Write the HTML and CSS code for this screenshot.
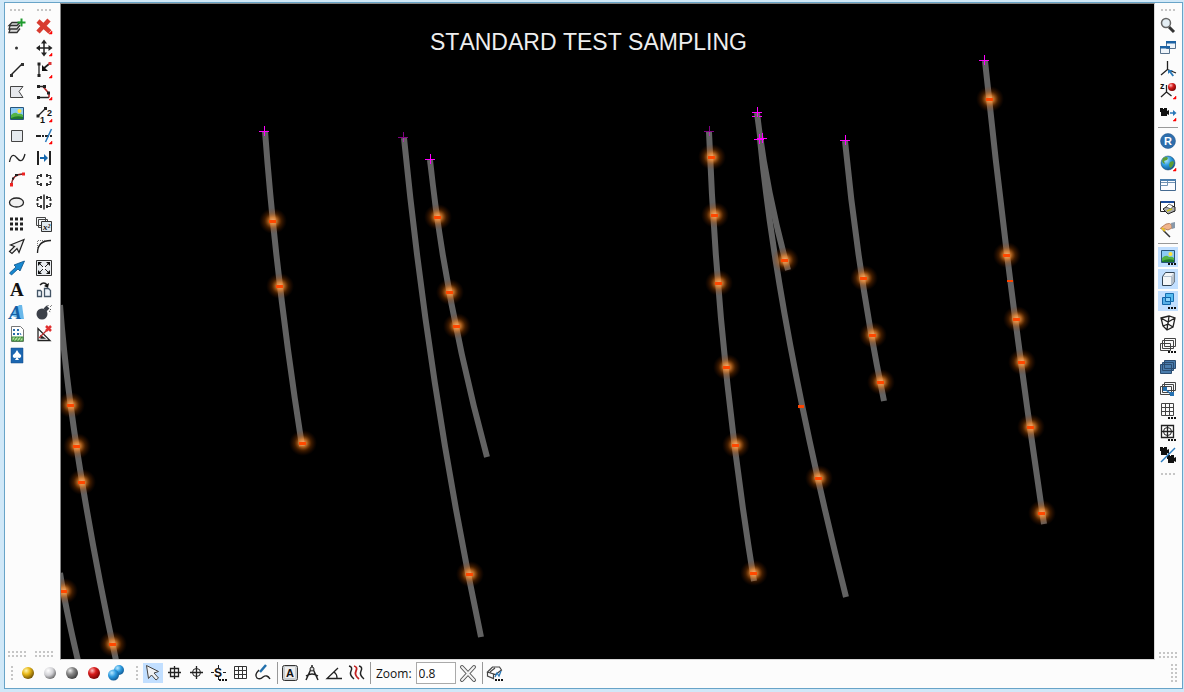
FILE: index.html
```html
<!DOCTYPE html>
<html lang="en">

<head>
    <meta charset="utf-8">
    <title>Standard Test Sampling</title>
    <meta name="viewport" content="width=device-width, initial-scale=1.0">
    <link rel="stylesheet" href="styles.css">
</head>

<body>
    <!-- shared shapes -->
    <svg class="defs" width="0" height="0" aria-hidden="true">
        <defs>
            <path id="more" d="M18 15v3h-3z" fill="#f00" stroke="#f00" stroke-width=".5" />
            <path id="dots" d="M10 16h2v2h-2zM13 16h2v2h-2zM16 16h2v2h-2z" fill="#111" stroke="none" />
            <radialGradient id="glow">
                <stop offset="0" stop-color="#ffb878" stop-opacity=".95" />
                <stop offset=".3" stop-color="#ff9030" stop-opacity=".7" />
                <stop offset=".6" stop-color="#d05c00" stop-opacity=".3" />
                <stop offset="1" stop-color="#802800" stop-opacity="0" />
            </radialGradient>
            <g id="sample">
                <ellipse cx="1" rx="14" ry="13" fill="url(#glow)" />
                <path d="M-3-1h7v3h-7z" fill="#ff4800" />
            </g>
            <path id="collar" d="M-5 .5H5M.5-5V5" stroke="#f0f" />
            <radialGradient id="gold" cx=".35" cy=".3" r=".8"><stop offset="0" stop-color="#fff6b0" /><stop offset=".4" stop-color="#e8b818" /><stop offset="1" stop-color="#5c4000" /></radialGradient>
            <radialGradient id="silver" cx=".35" cy=".3" r=".8"><stop offset="0" stop-color="#fff" /><stop offset=".5" stop-color="#d0d0d4" /><stop offset="1" stop-color="#555" /></radialGradient>
            <radialGradient id="gray" cx=".35" cy=".3" r=".8"><stop offset="0" stop-color="#eee" /><stop offset=".4" stop-color="#888" /><stop offset="1" stop-color="#303030" /></radialGradient>
            <radialGradient id="red" cx=".35" cy=".3" r=".8"><stop offset="0" stop-color="#ffc0c0" /><stop offset=".4" stop-color="#d81c1c" /><stop offset="1" stop-color="#600" /></radialGradient>
            <radialGradient id="blue" cx=".35" cy=".3" r=".8"><stop offset="0" stop-color="#b8e8ff" /><stop offset=".45" stop-color="#2e9ce0" /><stop offset="1" stop-color="#0a4f88" /></radialGradient>
            <g id="picture" stroke="none">
                <path d="M3.500 3.500h13v12h-13z" fill="#8ccbf4" stroke="#27567c" />
                <circle cx="12.500" cy="7" r="2" fill="#ffe23c" />
                <path d="M4 11q4-4 7-1 3-1 5 1v4H4z" fill="#54b444" />
                <path d="M4 14q6-3 12-1v2H4z" fill="#1f7a2c" />
            </g>
            <g id="brackets">
                <path d="M7 5.500H3.500V8M3.500 12v2.500H7M13 5.500h3.500V8M16.500 12v2.500H13" />
                <path d="M6 4h2v3H6zM6 13h2v3H6zM12 4h2v3h-2zM12 13h2v3h-2zM2.500 7h2v2h-2zM2.500 11h2v2h-2zM15.500 7h2v2h-2zM15.500 11h2v2h-2z" fill="#333" stroke="none" />
            </g>
            <path id="camera" d="M0 0h3v1h1V0h3v3l2-1v5L7 6v2H1V4H0z" fill="#111" stroke="none" />
        </defs>
    </svg>

    <div class="window">
        <main class="workspace">
            <div class="toolbar">
                <span class="grip"></span>
                <button type="button" aria-label="Add layer"><svg viewBox="0 0 20 20"><path d="M5 6.500h8l-3 3H2zM3 10l-1 3h8l3-4M3 13.500l-1 3h8l3-4" fill="#ddd" stroke="#333" stroke-width="1.300" /><path d="M14.500 2.500v8M10.500 6.500h8" stroke="#1d9a2c" stroke-width="2" /></svg></button>
                <button type="button" aria-label="Point"><svg viewBox="0 0 20 20"><circle cx="9.500" cy="10" r="1.500" fill="#333" stroke="none" /></svg></button>
                <button type="button" aria-label="Line"><svg viewBox="0 0 20 20"><path d="M4 15 15 4" stroke-width="1.500" /><path d="M3 14h3v3H3zM14 3h3v3h-3z" fill="#333" stroke="none" /></svg></button>
                <button type="button" aria-label="Polygon"><svg viewBox="0 0 20 20"><path d="M3.500 4.500h12.500l-4 5 4 6H3.500z" fill="#e6e8ec" stroke="#444" /></svg></button>
                <button type="button" aria-label="Image"><svg viewBox="0 0 20 20"><use href="#picture" /></svg></button>
                <button type="button" aria-label="Rectangle"><svg viewBox="0 0 20 20"><path d="M4.500 4.500h11v11h-11z" fill="#e6eaee" stroke="#444" /></svg></button>
                <button type="button" aria-label="Curve"><svg viewBox="0 0 20 20"><path d="M2.500 14C4 6 7 6 10 10s6 4 8-4" stroke-width="1.300" /></svg></button>
                <button type="button" aria-label="Arc"><svg viewBox="0 0 20 20"><path d="M4.500 15C5 8 9 4 16 4" stroke="#822" stroke-width="1.300" /><path d="M3 13h3v3.500H3zM15 2.500h3v3h-3z" fill="#e22" stroke="none" /><path d="M5 7.500h2v2H5zM8 4h3v2H8z" fill="#222" stroke="none" /></svg></button>
                <button type="button" aria-label="Ellipse"><svg viewBox="0 0 20 20"><ellipse cx="9.500" cy="10.500" rx="7" ry="4.500" fill="#f0f0f0" stroke-width="1.300" /></svg></button>
                <button type="button" aria-label="Point grid"><svg viewBox="0 0 20 20"><path d="M4.500 3.500v14M9.500 3.500v14M14.500 3.500v14" stroke="#222" stroke-width="3" stroke-dasharray="3 2" /></svg></button>
                <button type="button" aria-label="Outline arrow"><svg viewBox="0 0 20 20"><path d="M17 3.500 3.500 9l4 1.500-5 5 2.500 2 5-5 2 4z" fill="#eee" stroke="#222" stroke-width="1.200" /></svg></button>
                <button type="button" aria-label="Arrow"><svg viewBox="0 0 20 20"><path d="M17.500 3 7 7l2 2-6.500 6 2 2L11 11l2 2z" fill="#1688d0" stroke="#0b5188" stroke-width=".8" /></svg></button>
                <button type="button" aria-label="Text"><svg viewBox="0 0 20 20"><text x="3" y="16" class="serif-letter">A</text></svg></button>
                <button type="button" aria-label="3D text"><svg viewBox="0 0 20 20"><path d="M3 13 12 3h3l2 14h-4z" fill="#6ab8ea" stroke="none" /><text x="2" y="17" class="serif-letter slanted">A</text></svg></button>
                <button type="button" aria-label="Report"><svg viewBox="0 0 20 20"><path d="M4.500 2.500h9l3 3v12h-12z" fill="#fff" stroke="#777" /><path d="M6 5l2 2m0-2L6 7m4-2 2 2m0-2-2 2M6 9l2 2m0-2-2 2m4-2 2 2m0-2-2 2m3-2 1 2" stroke="#2a6caa" /><path d="M5 13h11v4H5z" fill="#b6e0a0" stroke="#3b8c38" /><path d="m6 17 3-4m0 4 3-4m0 4 3-4" stroke="#3b8c38" /></svg></button>
                <button type="button" aria-label="Solitaire"><svg viewBox="0 0 20 20"><path d="M4 2h12v15H4z" fill="#1c66b0" stroke="#144d88" stroke-width=".5" /><path d="M10 4q1 2.500 4 5c1 3-2 3.500-3.500 2.500L12 14H8l1.500-2.500C8 12.500 5 12 6 9q3-2.500 4-5z" fill="#fff" stroke="none" /></svg></button>
                <span class="grip double bottom"></span>
            </div>

            <div class="toolbar">
                <span class="grip"></span>
                <button type="button" aria-label="Delete"><svg viewBox="0 0 20 20"><path d="m4 5 12 11M15 4 4 16" stroke="#d83c30" stroke-width="4.500" /><use href="#more" /></svg></button>
                <button type="button" aria-label="Move"><svg viewBox="0 0 20 20"><path d="M10 3v14M3 10h14" stroke-width="1.500" /><path d="m10 1.500 3 4H7zM10 18.500l3-4H7zM2 10l4-3v6zM18.500 10l-4-3v6z" fill="#222" stroke="none" /><use href="#more" /></svg></button>
                <button type="button" aria-label="Move vertex"><svg viewBox="0 0 20 20"><path d="M5 4v12" stroke-width="1.300" /><path d="M3.500 2.500h3v3h-3zM3.500 14h3v3h-3z" fill="#222" stroke="none" /><path d="m9 9 6-5" stroke-width="1.700" /><path d="M8 5v6h6z" fill="#111" stroke="none" /><path d="M14.500 2h3v3h-3z" fill="#d33" stroke="none" /><use href="#more" /></svg></button>
                <button type="button" aria-label="Edit vertices"><svg viewBox="0 0 20 20"><path d="M4 4.500h5M4 15.500h11" stroke-width="1.300" /><path d="m9 4.500 6 7v4" stroke="#b42828" stroke-width="1.600" /><path d="M3 3h3v3H3zM9 3h3v3H9zM3 14h3v3H3zM13 9.500h3v3h-3z" fill="#222" stroke="none" /><use href="#more" /></svg></button>
                <button type="button" aria-label="Reorder"><svg viewBox="0 0 20 20"><path d="m4 12 8-8" stroke-width="1.300" /><path d="M2.500 10.500h3v3h-3zM10 3h3v3h-3z" fill="#222" stroke="none" /><text x="13" y="12" class="digit">2</text><text x="6" y="19" class="digit">1</text><use href="#more" /></svg></button>
                <button type="button" aria-label="Extend line"><svg viewBox="0 0 20 20"><path d="M2 10h5M8 10h2M11 10h4M16 10h2" stroke-width="2" /><path d="m11.500 16 6-13" stroke="#2878bc" stroke-width="1.500" /><use href="#more" /></svg></button>
                <button type="button" aria-label="Fit between"><svg viewBox="0 0 20 20"><path d="M4 3v14M16 3v14" stroke-width="2" /><path d="M6 10h5" stroke="#1668ae" stroke-width="2" /><path d="m10 6 4 4-4 4z" fill="#1668ae" stroke="none" /></svg></button>
                <button type="button" aria-label="Join"><svg viewBox="0 0 20 20"><use href="#brackets" /></svg></button>
                <button type="button" aria-label="Split"><svg viewBox="0 0 20 20"><use href="#brackets" /><path d="M10 2.500v15" stroke-width="1.500" /></svg></button>
                <button type="button" aria-label="Field calculator"><svg viewBox="0 0 20 20"><path d="M2.500 3.500h9v8h-9zM4.500 5.500h9v8h-9z" fill="#f4f6f8" stroke="#444" /><path d="M7.500 7.500h10v10h-10z" fill="#dfe8ee" stroke="#333" /><text x="9" y="16" class="math">x²</text></svg></button>
                <button type="button" aria-label="Fillet"><svg viewBox="0 0 20 20"><path d="M3.500 17C3.500 9 8 4.500 17 4.500" stroke-width="1.300" /><path d="M3.500 12V4.500H11" stroke="#777" stroke-dasharray="1 1" /></svg></button>
                <button type="button" aria-label="Explode"><svg viewBox="0 0 20 20"><path d="M2.500 2.500h15v15h-15z" fill="#e8ecf0" stroke="#333" /><path d="m5 5 10 10M15 5 5 15" /><path d="M4 4h4L4 8zM16 4v4l-4-4zM4 16v-4l4 4zM16 16h-4l4-4z" fill="#111" stroke="none" /><circle cx="10" cy="10" r="1.500" fill="#fff" stroke="none" /></svg></button>
                <button type="button" aria-label="Copy to"><svg viewBox="0 0 20 20"><path d="M6 5q4-4 7 0" stroke-width="1.600" /><path d="m15 3-1 5-4-2z" fill="#111" stroke="none" /><path d="M3.500 10.500h3l1 1v5h-4zM10.500 8.500h4l2 2v6h-6z" fill="#eef4fa" stroke="#456" stroke-width="1.300" /></svg></button>
                <button type="button" aria-label="Purge"><svg viewBox="0 0 20 20"><circle cx="8" cy="12" r="5.500" fill="#3b4048" stroke="none" /><path d="m11 8 3-3" stroke="#3b4048" stroke-width="4" /><path d="M14 4V2M16 5l2-2M16 7.500h2M15 9l2 1" stroke="#444" stroke-dasharray="1 1" /></svg></button>
                <button type="button" aria-label="Clear slope"><svg viewBox="0 0 20 20"><path d="M4 4.500v12h12zM7 12v2h3z" stroke-width="1.300" /><path d="m5 14 8-8" stroke="#b33" stroke-width="1.300" /><path d="m12 2 5 5M17 2l-5 5" stroke="#e03030" stroke-width="2.500" /></svg></button>
                <span class="grip double bottom"></span>
            </div>

            <section class="viewport">
                <svg viewBox="61 4 1093 655" preserveAspectRatio="xMinYMin slice" role="img" aria-label="Drill hole view">
                    <g class="holes">
                        <path d="M265 131Q276 280 302 446" />
                        <path d="M404 138Q429 390 481 637" />
                        <path d="M430 160Q445 302 487 457" />
                        <path d="M709 132Q718 360 754 581" />
                        <path d="M757 113Q766 190 788 270" />
                        <path d="M760 139Q778 325 846 597" />
                        <path d="M845 141Q858 275 884 401" />
                        <path d="M985 61Q1009 292 1044 524" />
                        <path d="M60 305Q71 450 117 665" />
                        <path d="M60 573Q66 610 79 665" />
                    </g>
                    <g class="collars">
                        <use href="#collar" x="264" y="131" />
                        <use href="#collar" x="403" y="137" class="dim" />
                        <use href="#collar" x="430" y="159" />
                        <use href="#collar" x="709" y="131" class="dim" />
                        <use href="#collar" x="757" y="112" />
                        <path d="M752 116.500h3M759 116.500h3" stroke="#f0f" />
                        <use href="#collar" x="759" y="139" />
                        <use href="#collar" x="762" y="138" />
                        <use href="#collar" x="845" y="140" />
                        <use href="#collar" x="984" y="60" />
                    </g>
                    <g class="samples">
                        <use href="#sample" x="272" y="221" />
                        <use href="#sample" x="279" y="286" />
                        <use href="#sample" x="302" y="443" />
                        <use href="#sample" x="469" y="574" />
                        <use href="#sample" x="437" y="217" />
                        <use href="#sample" x="449" y="292" />
                        <use href="#sample" x="456" y="326" />
                        <use href="#sample" x="711" y="157" />
                        <use href="#sample" x="714" y="215" />
                        <use href="#sample" x="718" y="283" />
                        <use href="#sample" x="726" y="367" />
                        <use href="#sample" x="735" y="445" />
                        <use href="#sample" x="753" y="573" />
                        <use href="#sample" x="784" y="260" />
                        <use href="#sample" x="818" y="478" />
                        <use href="#sample" x="863" y="278" />
                        <use href="#sample" x="872" y="335" />
                        <use href="#sample" x="880" y="382" />
                        <use href="#sample" x="989" y="99" />
                        <use href="#sample" x="1006" y="255" />
                        <use href="#sample" x="1016" y="319" />
                        <use href="#sample" x="1021" y="362" />
                        <use href="#sample" x="1030" y="427" />
                        <use href="#sample" x="1041" y="513" />
                        <use href="#sample" x="70" y="405" />
                        <use href="#sample" x="76" y="446" />
                        <use href="#sample" x="81" y="482" />
                        <use href="#sample" x="63" y="591" />
                        <use href="#sample" x="112" y="644" />
                        <path d="M798 405h6v3h-6zM1007 280h6v2h-6z" fill="#ff4500" />
                    </g>
                    <text x="430" y="50" class="title">STANDARD TEST SAMPLING</text>
                </svg>
            </section>

            <div class="toolbar view-tools">
                <span class="grip"></span>
                <button type="button" aria-label="Zoom window"><svg viewBox="0 0 20 20"><path d="m11 12 5 5" stroke="#333" stroke-width="3" /><circle cx="8" cy="8" r="4.500" fill="#e4eef4" stroke="#666" stroke-width="1.500" /></svg></button>
                <button type="button" aria-label="Windows"><svg viewBox="0 0 20 20"><path d="M8.500 4.500h9v7h-9zM2.500 9.500h9v7h-9z" fill="#eef4fa" stroke="#57718c" /><path d="M8 4h10v2.500H8zM2 9h10v2.500H2z" fill="#1c62a4" stroke="none" /></svg></button>
                <button type="button" aria-label="Pick axis"><svg viewBox="0 0 20 20"><path d="M9.500 2v8.500L3 16M9.500 10.500 18 14" stroke-width="1.300" /><path d="M10 11h5l-2 1.500 3 4-1.500 1-3-4L10 15z" fill="#2878b8" stroke="none" /></svg></button>
                <button type="button" aria-label="Z axis view"><svg viewBox="0 0 20 20"><path d="M8.500 4v7L3 16M8.500 11l5 4" stroke-width="1.300" /><text x="2" y="8" class="axis">z</text><circle cx="14" cy="6" r="4" fill="url(#red)" stroke="none" /><use href="#more" /></svg></button>
                <button type="button" aria-label="Camera move"><svg viewBox="0 0 20 20"><use href="#camera" x="2" y="5" /><path d="M12 10h4" stroke="#2878b8" stroke-width="1.500" /><path d="m15 7 3.500 3-3.500 3z" fill="#2878b8" stroke="none" /><use href="#more" /></svg></button>
                <span class="divider"></span>
                <button type="button" aria-label="Registered view"><svg viewBox="0 0 20 20"><circle cx="10" cy="10" r="7.500" fill="#2e6eac" stroke="#1d5088" stroke-width=".5" /><text x="6" y="14" class="badge-letter">R</text></svg></button>
                <button type="button" aria-label="Globe"><svg viewBox="0 0 20 20"><circle cx="10" cy="10" r="7" fill="url(#blue)" stroke="#0b3c68" stroke-width=".5" /><path d="M5 5q4-2 5 0l-1 2-3 1 1 3-2-1-1-2zM12 9l3-1 1 2-2 4-2 1-1-3z" fill="#5c9c34" stroke="none" /><use href="#more" /></svg></button>
                <button type="button" aria-label="Layout"><svg viewBox="0 0 20 20"><path d="M2.500 4.500h15v11h-15z" fill="#fafcff" stroke="#456a90" /><path d="M3 7.500h14M9.500 4.500v6h-7" stroke="#6f92b4" /><path d="M2 4h16v2H2z" fill="#4c80b0" stroke="none" /></svg></button>
                <button type="button" aria-label="Print view"><svg viewBox="0 0 20 20"><path d="M2.500 4.500h14v10h-14z" fill="#fff" stroke="#222" /><path d="M3 4h13v2H3z" fill="#1c4c9c" stroke="none" /><path d="m5 12 6-4 6 2v4l-7 3z" fill="#aaa" stroke="#222" /><path d="m8 10 3-3 4 2-2 3z" fill="#fff" stroke="#333" stroke-width=".7" /><path d="m9 14 5-2" stroke="#c8c020" stroke-width="1.500" /></svg></button>
                <button type="button" aria-label="Wand"><svg viewBox="0 0 20 20"><path d="M2.500 9 8 5q4-1.500 6 1v3l-4 2-3-1H3z" fill="#f0b48c" stroke="#9c6040" stroke-width=".7" /><path d="m13 4 4-1v6l-3 1z" fill="#89a" stroke="none" /><path d="m5 11 7 7" stroke="#333" stroke-width="1.500" /><path d="m4 9 3 3" stroke="#e8c020" stroke-width="2" /></svg></button>
                <span class="divider"></span>
                <button type="button" class="active" aria-label="Show images"><svg viewBox="0 0 20 20"><use href="#picture" /><use href="#dots" /></svg></button>
                <button type="button" class="active" aria-label="Solid view"><svg viewBox="0 0 20 20"><path d="m4.500 7.500 3-4h9v9l-3 4h-9z" fill="#f4f6f8" stroke="#345" /><path d="M14 8v8l2.500-4v-8z" fill="#b8c0c8" stroke="none" /><path d="M5 7.500h8.500v9m0-9 3-4" stroke="#9ab" stroke-width=".7" /></svg></button>
                <button type="button" class="active" aria-label="Transparent view"><svg viewBox="0 0 20 20"><path d="M7.500 2.500h8v8h-8z" fill="#58bcf0" stroke="#1870b0" /><path d="M4.500 6.500h8v7h-8z" fill="#36a0e0" fill-opacity=".75" stroke="#1064a8" /><path d="M7.500 6.500h5v4h-5z" fill="#8cd4fa" stroke="#1064a8" /><use href="#dots" /></svg></button>
                <button type="button" aria-label="Wireframe"><svg viewBox="0 0 20 20"><path d="m3 5 8-2 6 2-2 9-6 3-4-4zM3 5l7 4 7-4M10 9l-1 8M11 3l-1 8-5 2m5-2 5 3" stroke-width="1.300" /></svg></button>
                <button type="button" aria-label="Sections"><svg viewBox="0 0 20 20"><path d="M6.500 3.500h11v8h-11zM4.500 5.500h11v8h-11zM2.500 8.500h10v7h-10z" fill="#fafafa" stroke="#444" /><use href="#dots" /></svg></button>
                <button type="button" aria-label="Filled sections"><svg viewBox="0 0 20 20"><path d="M6.500 3.500h11v8h-11zM4.500 5.500h11v8h-11zM2.500 7.500h11v9h-11z" fill="#4a7cac" stroke="#2b4c70" /></svg></button>
                <button type="button" aria-label="Link sections"><svg viewBox="0 0 20 20"><path d="M6.500 3.500h11v8h-11zM4.500 5.500h11v8h-11zM2.500 7.500h11v8h-11z" fill="#f8fafc" stroke="#444" /><path d="m7 10 7 6" stroke="#2470b0" stroke-width="1.500" /><path d="M5 8h4v4H5zM12 13h4v4h-4z" fill="#2470b0" stroke="none" /></svg></button>
                <button type="button" aria-label="Grid"><svg viewBox="0 0 20 20"><path d="M3.500 2.500h12v12h-12zM7.500 2.500v12M11.500 2.500v12M3.500 6.500h12M3.500 10.500h12" stroke="#444" /><use href="#dots" /></svg></button>
                <button type="button" aria-label="Target"><svg viewBox="0 0 20 20"><path d="M3.500 2.500h12v12h-12z" fill="#fff" stroke-width="1.300" /><circle cx="9.500" cy="8.500" r="4" /><path d="M9.500 3v11M4 8.500h11" stroke-width="1.300" /><use href="#dots" /></svg></button>
                <button type="button" aria-label="Swap cameras"><svg viewBox="0 0 20 20"><use href="#camera" x="2" y="2" /><use href="#camera" x="9" y="10" /><path d="M3 17 17 3" stroke="#2a7cc0" stroke-width="1.500" /></svg></button>
                <span class="grip after"></span>
                <span class="grip double bottom"></span>
            </div>
        </main>

        <footer class="statusbar">
            <span class="vgrip"></span>
            <button type="button" aria-label="Gold"><svg viewBox="0 0 20 20"><circle cx="10" cy="10" r="6" fill="url(#gold)" stroke="none" /></svg></button>
            <button type="button" aria-label="Silver"><svg viewBox="0 0 20 20"><circle cx="10" cy="10" r="6" fill="url(#silver)" stroke="none" /></svg></button>
            <button type="button" aria-label="Gray"><svg viewBox="0 0 20 20"><circle cx="10" cy="10" r="6" fill="url(#gray)" stroke="none" /></svg></button>
            <button type="button" aria-label="Red"><svg viewBox="0 0 20 20"><circle cx="10" cy="10" r="6" fill="url(#red)" stroke="none" /></svg></button>
            <button type="button" aria-label="Blue pair"><svg viewBox="0 0 20 20"><circle cx="13" cy="7" r="5" fill="url(#blue)" stroke="none" /><circle cx="7.500" cy="12" r="5.500" fill="url(#blue)" stroke="none" /></svg></button>
            <span class="vgrip second"></span>
            <button type="button" class="active" aria-label="Select"><svg viewBox="0 0 20 20"><path d="m3.500 2.500 2 13 3-3.500 4.500 5 2.500-2-4.500-5 4.500-1.500z" fill="#f0f2f4" stroke="#444" /></svg></button>
            <button type="button" aria-label="Snap box"><svg viewBox="0 0 20 20"><path d="M5.500 5.500h8v8h-8zM9.500 3v13M3 9.500h13" stroke-width="1.300" /></svg></button>
            <button type="button" aria-label="Snap circle"><svg viewBox="0 0 20 20"><circle cx="9.500" cy="9.500" r="4" /><path d="M9.500 3v13M3 9.500h13" stroke-width="1.300" /></svg></button>
            <button type="button" aria-label="Snap settings"><svg viewBox="0 0 20 20"><path d="M9.500 2v3M9.500 14v3M2 9.500h3M14 9.500h3" /><text x="5" y="14" class="snap-letter">S</text><use href="#dots" /></svg></button>
            <button type="button" aria-label="Snap grid"><svg viewBox="0 0 20 20"><path d="M3.500 3.500h12v12h-12zM7.500 3.500v12M11.500 3.500v12M3.500 7.500h12M3.500 11.500h12" stroke="#333" /></svg></button>
            <button type="button" aria-label="Sketch"><svg viewBox="0 0 20 20"><path d="m7 9 6-7" stroke="#2270ac" stroke-width="2.500" /><path d="M6 7q-5 5-2 8 3 2 6-1 4-3 7 2" stroke-width="1.400" /></svg></button>
            <span class="vdivider"></span>
            <button type="button" aria-label="Label"><svg viewBox="0 0 20 20"><rect x="2.500" y="2.500" width="15" height="15" rx="2" fill="#c8ccce" stroke="#333" /><path d="M5 4h10v11H5z" fill="#eee" stroke="none" /><text x="6" y="14" class="key-letter">A</text></svg></button>
            <button type="button" aria-label="Compass"><svg viewBox="0 0 20 20"><path d="m9 6-5 11M11 6l5 11M10 2v3M4 13q6-4 12 0" stroke-width="1.500" /><circle cx="10" cy="6" r="2" fill="#ddd" /></svg></button>
            <button type="button" aria-label="Angle"><svg viewBox="0 0 20 20"><path d="M14 5 3 15.500h15M10 9q3 2 3 6" stroke-width="1.300" /></svg></button>
            <button type="button" aria-label="Strings"><svg viewBox="0 0 20 20"><path d="M3 3q4 1 2 5t3 8M13 3q4 1 2 5t3 8" stroke-width="1.500" /><path d="M8 3q4 1 2 5t3 8" stroke="#c32020" stroke-width="1.800" /></svg></button>
            <span class="vdivider"></span>
            <label for="zoom">Zoom:</label>
            <input type="text" id="zoom" name="zoom" value="0.8">
            <button type="button" aria-label="Reset zoom"><svg viewBox="0 0 20 20"><path d="m4 4 12 13M16 4 4 17" stroke="#555" stroke-width="4" stroke-linecap="round" /><path d="m4 4 12 13M16 4 4 17" stroke="#f4f4f4" stroke-width="2" stroke-linecap="round" /></svg></button>
            <span class="vdivider"></span>
            <button type="button" aria-label="Block model"><svg viewBox="0 0 20 20"><path d="m2.500 9 5-5h7l2 3-6 4.500zM2.500 9v4l6 2.500v-4.500M5 9l5-4" stroke="#444" stroke-width="1.200" /><path d="m10 14 2-4 2 3 2-5" stroke="#2a78b8" stroke-width="1.300" /><use href="#dots" /></svg></button>
            <span class="vgrip double end"></span>
        </footer>
    </div>
</body>

</html>
```
FILE: styles.css
```css
* {
    box-sizing: border-box;
}

body {
    margin: 0;
    height: 100vh;
    padding: 2px 1px 3px 4px;
    background-color: #d0e8f8;
    font-family: "Open Sans", "Noto Sans", sans-serif;
    font-size: 12px;
    color: #111;
}

.defs {
    position: absolute;
}

.window {
    display: flex;
    flex-direction: column;
    height: 100%;
    background-color: #fcfcfc;
    border: 1px solid #68a4c8;
}

.workspace {
    display: flex;
    flex: 1;
    min-height: 0;
}

/* toolbars */
.toolbar {
    display: flex;
    flex-direction: column;
    align-items: center;
    gap: 2px;
    padding: 6px 5px 0 2px;
}

.toolbar + .toolbar {
    padding-right: 6px;
}

.toolbar.view-tools {
    padding: 6px 4px 0 3px;
}

button {
    display: block;
    flex: none;
    width: 20px;
    height: 20px;
    padding: 0;
    border: 0;
    background-color: transparent;
    cursor: pointer;
}

button:hover,
button.active {
    background-color: #c2dfff;
}

button svg {
    display: block;
    width: 20px;
    height: 20px;
    fill: none;
    stroke: #222;
}

button text {
    fill: #111;
    stroke: none;
}

.grip,
.vgrip {
    flex: none;
    background-image: conic-gradient(transparent 75%, #c6c6c6 0);
    background-size: 4px 4px;
}

.grip {
    width: 14px;
    height: 2px;
    margin-bottom: 3px;
}

.view-tools .grip {
    margin-bottom: 2px;
}

.grip.double {
    width: 18px;
    height: 6px;
}

.grip.bottom {
    margin-top: auto;
}

.grip.after {
    margin-top: 6px;
}

.vgrip {
    width: 2px;
    height: 14px;
    margin-right: 3px;
}

.vgrip.second {
    margin-left: 8px;
}

.vgrip.double {
    width: 6px;
    height: 18px;
}

.vgrip.end {
    margin-left: auto;
}

.divider {
    width: 20px;
    height: 1px;
    margin: 2px 0 1px;
    background-color: #999;
}

.vdivider {
    width: 1px;
    height: 22px;
    margin-left: 2px;
    background-color: #999;
}

/* drawing area */
.viewport {
    flex: 1;
    min-width: 0;
    background-color: #000;
    border: 1px solid #d8d8d8;
    border-top-color: #888;
    border-left-color: #888;
}

.viewport svg {
    display: block;
    width: 100%;
    height: 100%;
}

.holes {
    fill: none;
    stroke: #626262;
    stroke-width: 6px;
}

.dim {
    opacity: 0.5;
}

.title {
    font-family: "Liberation Sans", Arial, sans-serif;
    font-size: 23px;
    font-kerning: none;
    fill: #eee;
}

/* letters inside icons */
.serif-letter {
    font: bold 19px "Liberation Serif", serif;
}

button .slanted {
    font-style: italic;
    fill: #1460a4;
}

.digit,
.axis {
    font: bold 9px "Liberation Sans", sans-serif;
}

.math {
    font: italic bold 9px "Liberation Serif", serif;
}

button .badge-letter {
    font: bold 11px "Liberation Sans", sans-serif;
    fill: #fff;
}

.snap-letter {
    font: bold 12px "Liberation Sans", sans-serif;
}

.key-letter {
    font: bold 11px "Liberation Sans", sans-serif;
}

/* bottom bar */
.statusbar {
    display: flex;
    align-items: center;
    gap: 2px;
    padding: 2px 2px 4px 6px;
}

label {
    padding: 0 2px 0 3px;
}

input[type="text"] {
    width: 40px;
    height: 22px;
    padding: 0 2px;
    border: 1px solid #aaa;
    background-color: #fff;
    font: inherit;
    color: #111;
}
```
